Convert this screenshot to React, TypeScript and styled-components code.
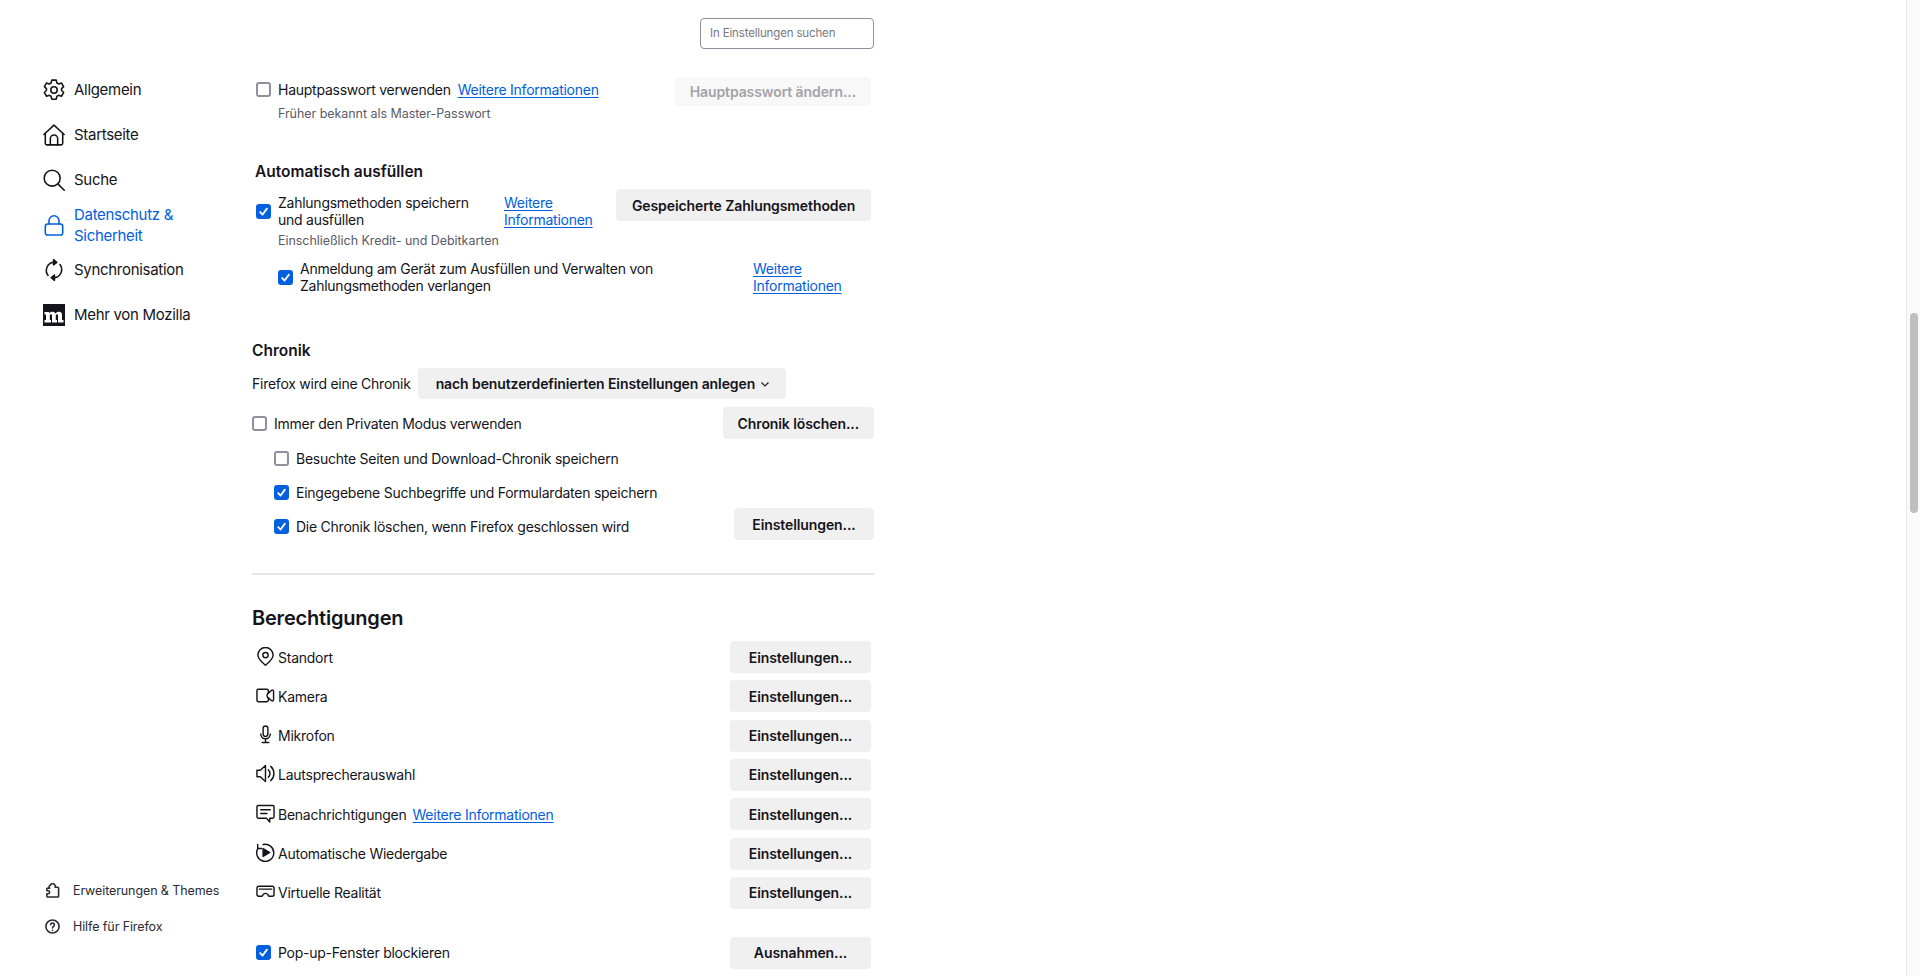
import React from "react";
import styled, { createGlobalStyle } from "styled-components";

const GlobalStyle = createGlobalStyle`
  html, body {
    margin: 0;
    height: 976px;
    overflow: hidden;
    background: #fff;
    color: #15141a;
    font-family: Inter, "Liberation Sans", sans-serif;
    font-size: 14px;
    letter-spacing: -0.25px;
  }
`;

const Page = styled.div`
  display: flex;
  height: 976px;
`;

const Sidebar = styled.nav`
  width: 252px;
  flex: none;
  display: flex;
  flex-direction: column;
  justify-content: space-between;
  padding: 67px 0 40px 43px;
  box-sizing: border-box;
`;

const NavList = styled.div`
  display: flex;
  flex-direction: column;
`;

const NavItem = styled.div<{ $active?: boolean }>`
  display: flex;
  align-items: center;
  gap: 9px;
  height: 45px;
  width: 165px;
  font-size: 15px;
  letter-spacing: -0.3px;
  line-height: 21px;
  color: ${(p) => (p.$active ? "#0060df" : "#15141a")};
`;

const FooterList = styled.div`
  display: flex;
  flex-direction: column;
  gap: 16px;
  padding-left: 2px;
`;

const FooterItem = styled.div`
  display: flex;
  align-items: center;
  gap: 13px;
  height: 20px;
  font-size: 12.5px;
  letter-spacing: -0.1px;
  color: #2b2a33;
`;

const Icon = styled.svg<{ $size?: number }>`
  width: ${(p) => p.$size ?? 22}px;
  height: ${(p) => p.$size ?? 22}px;
  flex: none;
  fill: none;
  stroke: currentColor;
  stroke-width: 1.7;
  stroke-linecap: round;
  stroke-linejoin: round;
`;

const Main = styled.main`
  width: 622px;
  flex: none;
`;

const SearchRow = styled.div`
  display: flex;
  justify-content: flex-end;
  margin-top: 18px;
`;

const SearchBox = styled.div`
  width: 174px;
  height: 31px;
  box-sizing: border-box;
  border: 1px solid #8f8f9d;
  border-radius: 4px;
  padding-left: 9px;
  font-size: 11.5px;
  letter-spacing: -0.15px;
  line-height: 29px;
  color: #77777d;
`;

const Block = styled.section<{ $left?: number; $right?: number }>`
  padding-left: ${(p) => p.$left ?? 0}px;
  padding-right: ${(p) => p.$right ?? 0}px;
`;

const Row = styled.div<{ $top?: number; $align?: string; $height?: number }>`
  display: flex;
  justify-content: space-between;
  align-items: ${(p) => p.$align ?? "center"};
  margin-top: ${(p) => p.$top ?? 0}px;
  ${(p) => (p.$height ? `height: ${p.$height}px;` : "")}
`;

const Label = styled.div<{ $top?: number; $indent?: number }>`
  display: flex;
  align-items: center;
  gap: 7px;
  line-height: 17px;
  margin-top: ${(p) => p.$top ?? 0}px;
  margin-left: ${(p) => p.$indent ?? 0}px;
`;

const LabelText = styled.div<{ $width?: number }>`
  ${(p) => (p.$width ? `width: ${p.$width}px;` : "")}
`;

const Link = styled.a<{ $width?: number; $gap?: number }>`
  color: #0060df;
  text-decoration: underline;
  text-underline-offset: 2px;
  ${(p) => (p.$width ? `width: ${p.$width}px;` : "")}
  ${(p) => (p.$gap ? `margin-left: ${p.$gap}px;` : "")}
`;

const Box = styled.span<{ $checked?: boolean }>`
  width: 15px;
  height: 15px;
  flex: none;
  box-sizing: border-box;
  display: flex;
  align-items: center;
  justify-content: center;
  border-radius: 3px;
  border: 2px solid ${(p) => (p.$checked ? "#0060df" : "#8f8f9d")};
  background: ${(p) => (p.$checked ? "#0060df" : "#fff")};
  svg {
    width: 11px;
    height: 11px;
    fill: none;
    stroke: #fff;
    stroke-width: 2;
    stroke-linecap: round;
    stroke-linejoin: round;
  }
`;

const Button = styled.div<{ $width?: number; $height?: number; $disabled?: boolean }>`
  flex: none;
  display: flex;
  align-items: center;
  justify-content: center;
  box-sizing: border-box;
  padding: 0 15px;
  height: ${(p) => p.$height ?? 32}px;
  ${(p) => (p.$width ? `width: ${p.$width}px;` : "")}
  border-radius: 4px;
  font-weight: 600;
  letter-spacing: -0.1px;
  background: ${(p) => (p.$disabled ? "#f8f8f8" : "#f0f0f0")};
  color: ${(p) => (p.$disabled ? "#a3a3a8" : "#15141a")};
`;

const Hint = styled.div<{ $top?: number; $indent?: number }>`
  margin-top: ${(p) => p.$top ?? 0}px;
  margin-left: ${(p) => p.$indent ?? 0}px;
  font-size: 12.5px;
  letter-spacing: -0.05px;
  line-height: 16px;
  color: #5b5b66;
`;

const Heading = styled.h2<{ $top: number; $shift?: number }>`
  margin: ${(p) => p.$top}px 0 0 ${(p) => p.$shift ?? 0}px;
  font-size: 15.5px;
  font-weight: 600;
  letter-spacing: 0;
  line-height: 20px;
`;

const SectionTitle = styled.h1`
  margin: 29px 0 0;
  font-size: 20px;
  font-weight: 600;
  letter-spacing: -0.2px;
  line-height: 28px;
`;

const Divider = styled.hr`
  margin: 33px 0 0;
  height: 2px;
  border: 0;
  background: #e5e5e8;
`;

const HistoryRow = styled.div`
  display: flex;
  align-items: center;
  gap: 7px;
  margin-top: 7px;
  height: 31px;
`;

const Dropdown = styled.div`
  display: flex;
  align-items: center;
  gap: 5px;
  width: 368px;
  height: 31px;
  box-sizing: border-box;
  padding-left: 18px;
  border-radius: 4px;
  background: #f0f0f0;
  font-weight: 600;
  letter-spacing: -0.1px;
  svg {
    width: 10px;
    height: 10px;
    fill: none;
    stroke: #15141a;
    stroke-width: 1.1;
  }
`;

const PermissionList = styled.div`
  display: flex;
  flex-direction: column;
  gap: 7.33px;
  margin-top: 9px;
`;

const PermissionRow = styled.div`
  display: flex;
  align-items: center;
  justify-content: space-between;
  height: 32px;
`;

const PermissionLabel = styled.div`
  display: flex;
  align-items: center;
  gap: 3px;
  svg {
    margin-top: -2px;
    stroke-width: 1.5;
  }
`;

const ScrollTrack = styled.div`
  width: 14px;
  margin-left: auto;
  box-sizing: border-box;
  padding: 313px 3px 0;
  background: #fafafa;
  border-left: 1px solid #e9e9e9;
`;

const ScrollThumb = styled.div`
  width: 8px;
  height: 200px;
  border-radius: 4px;
  background: #bfbfbf;
`;

const Check = () => (
  <svg viewBox="0 0 12 12">
    <path d="M2.4 6.6 5 9.3 9.7 2.9" />
  </svg>
);

const CheckBox = ({ checked }: { checked?: boolean }) => (
  <Box $checked={checked}>{checked && <Check />}</Box>
);

const GearIcon = () => (
  <Icon viewBox="0 0 24 24">
    <path d="M9.6 1.2h4.800l.8 3.200 1.900 1 3-1.100 2.400 4-2.300 2.200.1 2.100 2.200 2.200-2.400 4-3-1-1.900 1-.8 3.200H9.600l-.8-3.200-1.900-1-3 1-2.400-4 2.200-2.200.1-2.100L1.500 8.300l2.400-4 3 1.100 1.900-1z" />
    <circle cx="12" cy="12" r="3.500" />
  </Icon>
);

const HomeIcon = () => (
  <Icon viewBox="0 0 24 24">
    <path d="M1 11.500 12 1.200l11 10.300" />
    <path d="M2.500 10v11a1.800 1.800 0 0 0 1.800 1.800h15.400a1.800 1.800 0 0 0 1.800-1.800V10" />
    <path d="M8 22.800V16a4 4 0 0 1 8 0v6.800" />
  </Icon>
);

const SearchIcon = () => (
  <Icon viewBox="0 0 24 24">
    <circle cx="10" cy="10" r="8.700" />
    <path d="m16.200 16.200 7 7" />
  </Icon>
);

const LockIcon = () => (
  <Icon viewBox="0 0 24 24">
    <rect x="2.500" y="11" width="19" height="12" rx="2.500" />
    <path d="M6.500 11V7.500a5.500 5.500 0 0 1 11 0V11" />
  </Icon>
);

const SyncIcon = () => (
  <Icon viewBox="0 0 24 24">
    <path d="M5.500 18A9 9 0 0 1 11.500 3.600" />
    <path d="M18.500 6A9 9 0 0 1 12.500 20.400" />
    <path d="M11.500 .8 15 3.600l-3.500 2.800z" fill="currentColor" />
    <path d="M12.500 17.600 9 20.400l3.500 2.800z" fill="currentColor" />
  </Icon>
);

const MozillaLogo = styled.svg`
  width: 22px;
  height: 22px;
  flex: none;
  rect {
    fill: #15141a;
  }
  path {
    fill: #fff;
  }
`;

const MozillaIcon = () => (
  <MozillaLogo viewBox="0 0 22 22">
    <rect width="22" height="22" />
    <path d="M1.500 8H6V9.300C7 8.300 8.200 7.800 9.400 7.800 10.800 7.800 11.800 8.400 12.300 9.500 13.300 8.400 14.600 7.800 16 7.800 18 7.800 19 9 19 11V16H20.500V18.500H15V11.500C15 10.700 14.700 10.300 14.100 10.300 13.600 10.300 13.100 10.600 12.800 11V16H14V18.500H9V11.500C9 10.700 8.700 10.300 8.100 10.300 7.600 10.300 7.100 10.600 6.800 11V16H8V18.500H1.500V16H3V10.400H1.500Z" />
  </MozillaLogo>
);

const PuzzleIcon = () => (
  <Icon $size={15} viewBox="0 0 16 16">
    <path d="M7 1 4.600 3.400c-.6.700-.4 1.700.4 2.100H3a1 1 0 0 0-1 1V8.300h1.300a1.600 1.600 0 0 1 0 3.200H2V14a1 1 0 0 0 1 1h10.500a1 1 0 0 0 1-1V5.500a1 1 0 0 0-1-1H10.700c.5-.8.400-1.800-.3-2.500L9.500 1.100c-.7-.6-1.800-.7-2.500-.1z" />
  </Icon>
);

const HelpIcon = () => (
  <Icon $size={15} viewBox="0 0 16 16">
    <circle cx="8" cy="8" r="7" />
    <path d="M6 6.200a2 2 0 1 1 3 1.800c-.7.400-1 .8-1 1.500" />
    <path d="M8 12v.1" />
  </Icon>
);

const PinIcon = () => (
  <Icon $size={19} viewBox="0 0 20 20">
    <path d="M10 19.200c-2.200-2.200-8-5.800-8-10.700a8 8 0 0 1 16 0c0 4.900-5.800 8.500-8 10.700z" />
    <circle cx="10" cy="8.500" r="2.800" />
  </Icon>
);

const CameraIcon = () => (
  <Icon $size={19} viewBox="0 0 20 20">
    <path d="M13 7.500V5a1.500 1.500 0 0 0-1.500-1.500h-9A1.500 1.500 0 0 0 1 5v10a1.500 1.500 0 0 0 1.500 1.500h9A1.500 1.500 0 0 0 13 15v-2.500" />
    <path d="m13 7.500 3.500-3c.8-.6 2-.2 2 1v9c0 1.200-1.200 1.600-2 1l-3.500-3" />
    <path d="M13 7.500c-1 .8-1.500 1.600-1.500 2.500s.5 1.700 1.500 2.500" />
  </Icon>
);

const MicIcon = () => (
  <Icon $size={19} viewBox="0 0 20 20">
    <rect x="7.500" y="1" width="5" height="11" rx="2.500" />
    <path d="M5 9.500a5 5 0 0 0 10 0M10 14.500v4M6.500 18.500h7" />
  </Icon>
);

const SpeakerIcon = () => (
  <Icon $size={19} viewBox="0 0 20 20">
    <path d="M1 6.500h3.500L10 1.500v17l-5.500-5H1z" />
    <path d="M13 6a5.500 5.500 0 0 1 0 8" />
    <path d="M15.500 2.500a10 10 0 0 1 0 15" />
  </Icon>
);

const ChatIcon = () => (
  <Icon $size={19} viewBox="0 0 20 20">
    <path d="M2.500 1.500h15A1.500 1.500 0 0 1 19 3v10.500a1.500 1.500 0 0 1-1.500 1.500h-3v4L11 15H2.500A1.500 1.500 0 0 1 1 13.500V3a1.500 1.500 0 0 1 1.500-1.500z" />
    <path d="M5 6h10M5 10h6.500" />
  </Icon>
);

const AutoplayIcon = () => (
  <Icon $size={19} viewBox="0 0 20 20">
    <path d="M7.500 1.600A9 9 0 1 1 2 5.700" />
    <path d="M1.800 1.500v4.300h4.300" />
    <path d="M7.500 6 14.500 10l-7 4z" fill="currentColor" />
  </Icon>
);

const VrIcon = () => (
  <Icon $size={19} viewBox="0 0 20 20">
    <path d="M3 4.500h14a2 2 0 0 1 2 2v6.500a2 2 0 0 1-2 2h-3.500c-.8-1.800-2-3-3.500-3s-2.700 1.200-3.500 3H3a2 2 0 0 1-2-2V6.500a2 2 0 0 1 2-2z" />
    <path d="M3.500 7.500h13" />
  </Icon>
);

const permissions = [
  { icon: <PinIcon />, label: "Standort" },
  { icon: <CameraIcon />, label: "Kamera" },
  { icon: <MicIcon />, label: "Mikrofon" },
  { icon: <SpeakerIcon />, label: "Lautsprecherauswahl" },
  { icon: <ChatIcon />, label: "Benachrichtigungen", link: true },
  { icon: <AutoplayIcon />, label: "Automatische Wiedergabe" },
  { icon: <VrIcon />, label: "Virtuelle Realität" },
];

const App = () => {
  return (
    <Page>
      <GlobalStyle />
      <Sidebar>
        <NavList>
          <NavItem><GearIcon />Allgemein</NavItem>
          <NavItem><HomeIcon />Startseite</NavItem>
          <NavItem><SearchIcon />Suche</NavItem>
          <NavItem $active><LockIcon />Datenschutz &amp; Sicherheit</NavItem>
          <NavItem><SyncIcon />Synchronisation</NavItem>
          <NavItem><MozillaIcon />Mehr von Mozilla</NavItem>
        </NavList>
        <FooterList>
          <FooterItem><PuzzleIcon />Erweiterungen &amp; Themes</FooterItem>
          <FooterItem><HelpIcon />Hilfe für Firefox</FooterItem>
        </FooterList>
      </Sidebar>

      <Main>
        <SearchRow>
          <SearchBox>In Einstellungen suchen</SearchBox>
        </SearchRow>

        <Block $left={4} $right={3}>
          <Row $top={28} $height={29}>
            <Label $top={-4}>
              <CheckBox />
              <LabelText>Hauptpasswort verwenden</LabelText>
              <Link>Weitere Informationen</Link>
            </Label>
            <Button $height={29} $disabled>Hauptpasswort ändern...</Button>
          </Row>
          <Hint $indent={22}>Früher bekannt als Master-Passwort</Hint>

          <Heading $top={40} $shift={-1}>Automatisch ausfüllen</Heading>
          <Row $top={7} $align="flex-start">
            <Label $top={5}>
              <CheckBox checked />
              <LabelText $width={219}>Zahlungsmethoden speichern<br />und ausfüllen</LabelText>
              <Link $width={100}>Weitere Informationen</Link>
            </Label>
            <Button $width={255}>Gespeicherte Zahlungsmethoden</Button>
          </Row>
          <Hint $top={5} $indent={22}>Einschließlich Kredit- und Debitkarten</Hint>
          <Label $top={11} $indent={22}>
            <CheckBox checked />
            <LabelText $width={446}>Anmeldung am Gerät zum Ausfüllen und Verwalten von Zahlungsmethoden verlangen</LabelText>
            <Link $width={100}>Weitere Informationen</Link>
          </Label>
        </Block>

        <Heading $top={47}>Chronik</Heading>
        <HistoryRow>
          <span>Firefox wird eine Chronik</span>
          <Dropdown>
            nach benutzerdefinierten Einstellungen anlegen
            <svg viewBox="0 0 10 10"><path d="M1.500 3.500 5 7l3.500-3.500" /></svg>
          </Dropdown>
        </HistoryRow>
        <Row $top={8} $height={32}>
          <Label $top={1}>
            <CheckBox />
            <LabelText>Immer den Privaten Modus verwenden</LabelText>
          </Label>
          <Button>Chronik löschen...</Button>
        </Row>
        <Row $top={2} $height={34}>
          <Label $indent={22}>
            <CheckBox />
            <LabelText>Besuchte Seiten und Download-Chronik speichern</LabelText>
          </Label>
        </Row>
        <Row $height={34}>
          <Label $indent={22}>
            <CheckBox checked />
            <LabelText>Eingegebene Suchbegriffe und Formulardaten speichern</LabelText>
          </Label>
        </Row>
        <Row $top={-1} $align="flex-start">
          <Label $top={10} $indent={22}>
            <CheckBox checked />
            <LabelText>Die Chronik löschen, wenn Firefox geschlossen wird</LabelText>
          </Label>
          <Button $width={140}>Einstellungen...</Button>
        </Row>

        <Divider />
        <SectionTitle>Berechtigungen</SectionTitle>

        <Block $left={4} $right={3}>
          <PermissionList>
            {permissions.map((item) => (
              <PermissionRow key={item.label}>
                <PermissionLabel>
                  {item.icon}
                  <span>{item.label}</span>
                  {item.link && <Link $gap={3}>Weitere Informationen</Link>}
                </PermissionLabel>
                <Button $width={141}>Einstellungen...</Button>
              </PermissionRow>
            ))}
          </PermissionList>
          <Row $top={28} $height={32}>
            <Label>
              <CheckBox checked />
              <LabelText>Pop-up-Fenster blockieren</LabelText>
            </Label>
            <Button $width={141}>Ausnahmen...</Button>
          </Row>
        </Block>
      </Main>

      <ScrollTrack>
        <ScrollThumb />
      </ScrollTrack>
    </Page>
  );
};

export default App;
